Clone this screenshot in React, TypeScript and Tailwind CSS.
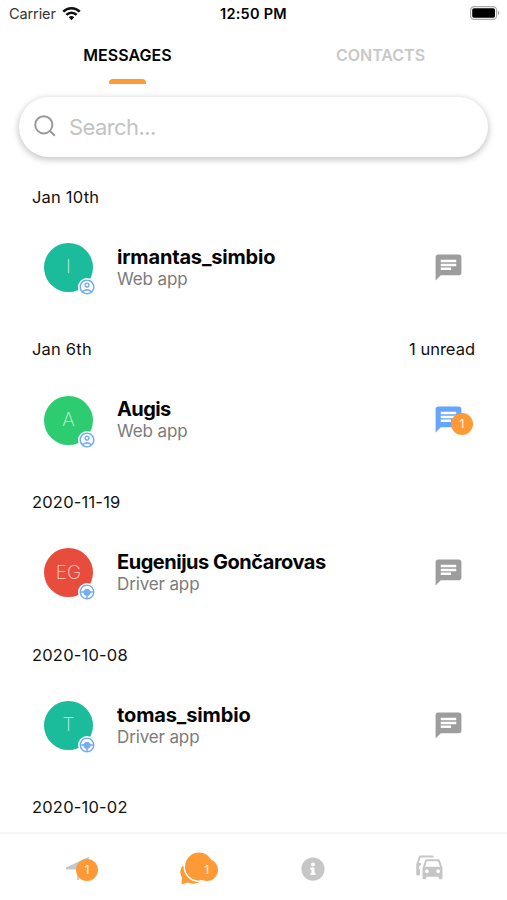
import { FaInfoCircle } from "react-icons/fa";
import { MdChat, MdOutlineAccountCircle } from "react-icons/md";

type AppKind = "Web app" | "Driver app";

interface Conversation {
  date: string;
  name: string;
  initials: string;
  app: AppKind;
  color: string;
  tracking: string;
  unread?: number;
}

const CONVERSATIONS: Conversation[] = [
  { date: "Jan 10th", name: "irmantas_simbio", initials: "I", app: "Web app", color: "bg-[#1abc9c]", tracking: "tracking-[-0.17px]" },
  { date: "Jan 6th", name: "Augis", initials: "A", app: "Web app", color: "bg-[#2ecc71]", tracking: "tracking-[-0.6px]", unread: 1 },
  { date: "2020-11-19", name: "Eugenijus Gončarovas", initials: "EG", app: "Driver app", color: "bg-[#e74c3c]", tracking: "tracking-[-0.48px]" },
  { date: "2020-10-08", name: "tomas_simbio", initials: "T", app: "Driver app", color: "bg-[#1abc9c]", tracking: "tracking-[-0.13px]" },
];

function SteeringWheel() {
  return (
    <svg viewBox="0 0 24 24" className="size-[18px]" fill="currentColor">
      <path d="M13,19.92C14.8,19.7 16.35,18.95 17.65,17.65C18.95,16.35 19.7,14.8 19.92,13H16.92C16.7,14 16.24,14.84 15.54,15.54C14.84,16.24 14,16.7 13,16.92V19.92M10,8H14L17,11H19.92C19.67,9.05 18.79,7.38 17.27,6C15.76,4.66 14,4 12,4C10,4 8.24,4.66 6.73,6C5.21,7.38 4.33,9.05 4.08,11H7L10,8M11,19.92V16.92C10,16.7 9.16,16.24 8.46,15.54C7.76,14.84 7.3,14 7.08,13H4.08C4.3,14.77 5.05,16.3 6.34,17.63C7.63,18.95 9.19,19.72 11,19.92M12,2A10,10 0 0,1 22,12A10,10 0 0,1 12,22A10,10 0 0,1 2,12A10,10 0 0,1 12,2Z" />
    </svg>
  );
}

function Badge({ count, className }: { count: number; className: string }) {
  return (
    <span
      className={`absolute flex size-[22px] items-center justify-center rounded-full bg-[#fd9a36] text-[12px] text-white/90 ${className}`}
    >
      {count}
    </span>
  );
}

function StatusBar() {
  return (
    <div className="grid h-7 shrink-0 grid-cols-3 items-center pr-[7px] pl-[9px]">
      <div className="flex items-center gap-[6px] text-[14.5px] tracking-[-0.1px] text-[#333]">
        Carrier
        <svg viewBox="0 0 20 15" className="mb-[2px] h-[15px] w-[19px]" fill="none" stroke="#111" strokeWidth="2.7">
          <path d="M1.3 5.6a12.3 12.3 0 0 1 17.4 0" />
          <path d="M4.6 9a7.6 7.6 0 0 1 10.8 0" />
          <path d="M10 14.6 7.1 11.5a4.2 4.2 0 0 1 5.8 0Z" fill="#111" stroke="none" />
        </svg>
      </div>
      <div className="-ml-[2px] pb-[1px] text-center text-[14.5px] font-semibold tracking-[0.25px]">12:50 PM</div>
      <svg viewBox="0 0 30 14" className="mb-[2px] h-[14px] w-[30px] justify-self-end">
        <rect x="0.6" y="0.6" width="26" height="12.8" rx="3.6" fill="#fff" stroke="#aaa" strokeWidth="1.2" />
        <rect x="2.2" y="2.2" width="22.8" height="9.6" rx="1.8" fill="#000" />
        <path d="M28 4.8c1.8.6 1.8 3.8 0 4.4Z" fill="#aaa" />
      </svg>
    </div>
  );
}

function Tabs() {
  return (
    <div className="grid h-[56px] shrink-0 grid-cols-2 pl-[1px] text-center text-[16px] font-semibold">
      <div className="flex flex-col items-center justify-between pt-[15px]">
        <span className="leading-6 tracking-[0.05px]">MESSAGES</span>
        <span className="h-[5px] w-[37px] rounded-t-[4px] rounded-b-[1px] bg-[#fd9a36]" />
      </div>
      <div className="pt-[15px] leading-6 text-[#c8c8c8]">CONTACTS</div>
    </div>
  );
}

function SearchBox() {
  return (
    <div className="mx-[19px] mt-[13px] flex h-[60px] shrink-0 items-center gap-[13px] rounded-full bg-white pl-[15px] shadow-[0_2px_6px_1px_rgba(0,0,0,0.22)]">
      <svg viewBox="0 0 22 22" className="mb-[2px] size-[22px]" fill="none" stroke="#999" strokeWidth="2">
        <circle cx="9.8" cy="9.8" r="8.6" />
        <path d="m16 16 4.8 4.8" />
      </svg>
      <span className="text-[22px] tracking-[-0.6px] text-[#c3c3c3]">Search...</span>
    </div>
  );
}

function ConversationRow({ item }: { item: Conversation }) {
  return (
    <section className="h-[152.7px] shrink-0">
      <div className="flex h-6 items-center justify-between pr-8 pl-8 text-[16.5px] text-[#111]">
        <span className="tracking-[0.2px]">{item.date}</span>
        {item.unread && <span>{item.unread} unread</span>}
      </div>
      <div className="mt-[33px] flex h-[50px] items-center pr-[46px] pl-[44px]">
        <div
          className={`relative flex size-[49px] items-center justify-center self-end rounded-full text-[19px] font-extralight text-white/75 ${item.color}`}
        >
          {item.initials}
          <span className="absolute -right-[3px] -bottom-[4px] flex size-[18px] items-center justify-center rounded-full bg-white text-[#74acf5]">
            {item.app === "Web app" ? <MdOutlineAccountCircle className="size-[18px]" /> : <SteeringWheel />}
          </span>
        </div>
        <div className="ml-6 flex-1">
          <div className={`text-[20px] leading-6 font-bold text-[#050505] ${item.tracking}`}>{item.name}</div>
          <div className="text-[17px] leading-[21px] tracking-[-0.13px] text-[#7b7b7b]">{item.app}</div>
        </div>
        <div className={`relative ${item.unread ? "text-[#66a5fb]" : "text-[#9d9d9d]"}`}>
          <MdChat className="-mr-[3px] size-[31px]" />
          {item.unread && <Badge count={item.unread} className="top-[9px] left-[18px]" />}
        </div>
      </div>
    </section>
  );
}

function BottomNav() {
  return (
    <nav className="grid h-[68px] shrink-0 grid-cols-4 border-t-2 border-[#f6f6f6] bg-white px-[22px] pt-[18px] text-[#c6c6c6]">
      <div className="relative">
        <svg viewBox="0 0 24 24" className="mt-[4px] ml-[44px] size-6" fill="currentColor">
          <path d="M0 11.6 23.5.6 12.8 24H11.2V13.4H0Z" />
        </svg>
        <Badge count={1} className="top-[7px] left-[54px]" />
      </div>
      <div className="relative text-[#fd9a36]">
        <svg viewBox="0 0 40 34" className="ml-[41px] h-[34px] w-[40px]" fill="currentColor">
          <path d="M3.4 14C.6 18 .8 22 3 25.4L2.4 32.6 8.6 30.6c4 1.5 8 1.4 11.8-.3L20 14Z" />
          <circle cx="20" cy="14.5" r="14.7" fill="none" stroke="#fff" strokeWidth="1.6" />
          <circle cx="20" cy="14.5" r="13.9" />
        </svg>
        <Badge count={1} className="top-[7px] left-[58px]" />
      </div>
      <FaInfoCircle className="mt-[5px] ml-[47px] size-6" />
      <svg viewBox="0 0 24 24" className="mt-[1px] ml-[46px] size-[30px]" fill="currentColor">
        <path d="M8,11L9.5,6.5H18.5L20,11M18.5,16A1.5,1.5 0 0,1 17,14.5A1.5,1.5 0 0,1 18.5,13A1.5,1.5 0 0,1 20,14.5A1.5,1.5 0 0,1 18.5,16M9.5,16A1.5,1.5 0 0,1 8,14.5A1.5,1.5 0 0,1 9.5,13A1.5,1.5 0 0,1 11,14.5A1.5,1.5 0 0,1 9.5,16M19.92,6C19.71,5.4 19.14,5 18.5,5H9.5C8.86,5 8.29,5.4 8.08,6L6,12V20A1,1 0 0,0 7,21H8A1,1 0 0,0 9,20V19H19V20A1,1 0 0,0 20,21H21A1,1 0 0,0 22,20V12L19.92,6M14.92,3C14.71,2.4 14.14,2 13.5,2H4.5C3.86,2 3.29,2.4 3.08,3L1,9V17A1,1 0 0,0 2,18H3A1,1 0 0,0 4,17V12.91C3.22,12.63 2.82,11.77 3.1,11C3.32,10.4 3.87,10 4.5,10H4.57L5.27,8H3L4.5,3.5H15.09L14.92,3Z" />
      </svg>
    </nav>
  );
}

export default function App() {
  return (
    <div className="flex h-[900px] w-[507px] flex-col overflow-hidden bg-white font-['Inter',sans-serif] text-black">
      <StatusBar />
      <Tabs />
      <SearchBox />
      <main className="flex min-h-0 flex-1 flex-col overflow-hidden pt-[28px]">
        {CONVERSATIONS.map((item) => (
          <ConversationRow key={item.date} item={item} />
        ))}
        <div className="flex h-6 shrink-0 items-center pl-8 text-[16.5px] tracking-[0.2px] text-[#111]">2020-10-02</div>
      </main>
      <BottomNav />
    </div>
  );
}
